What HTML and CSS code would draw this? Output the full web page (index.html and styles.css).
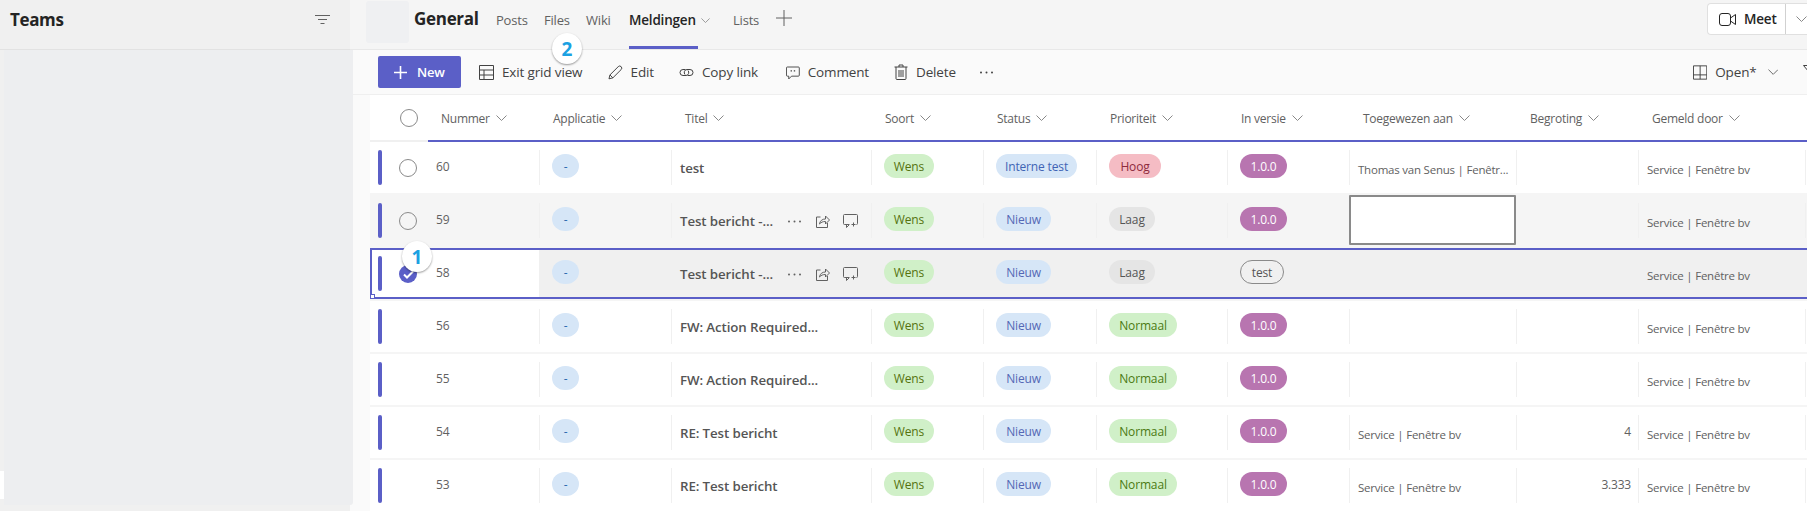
FILE: index.html
```
<!DOCTYPE html>
<html lang="en">
<head>
<meta charset="utf-8">
<title>Teams - General - Meldingen</title>
<link rel="stylesheet" href="styles.css">
</head>
<body>
<svg class="defs" width="0" height="0" aria-hidden="true">
  <symbol id="chev" viewBox="0 0 11 6"><path d="M.5.5 5.5 5.5 10.5.5" fill="none" stroke="currentColor"/></symbol>
  <symbol id="dots" viewBox="0 0 15 3"><circle cx="2" cy="1.5" r="1" fill="currentColor"/><circle cx="7.5" cy="1.5" r="1" fill="currentColor"/><circle cx="13" cy="1.5" r="1" fill="currentColor"/></symbol>
  <symbol id="share" viewBox="0 0 15 15"><path d="M5.5 3H1.5v10.500h11V9M4.500 10c.5-3.500 3-5 6-5V2l4 4-4 4V7.500c-2.500 0-4.500.7-6 2.500Z" fill="none" stroke="currentColor"/></symbol>
  <symbol id="cmtadd" viewBox="0 0 15 14"><path d="M6 10.500H1.500a1 1 0 0 1-1-1V1.500a1 1 0 0 1 1-1h12a1 1 0 0 1 1 1v8a1 1 0 0 1-1 1M3.500 10.500V13.500l3-3M10.500 8.500v4M8.500 10.500h4" fill="none" stroke="currentColor"/></symbol>
</svg>
<div class="app">
  <aside class="sidebar">
    <header class="side-head">
      <h1 class="side-title">Teams</h1>
      <svg class="side-filter" width="16" height="10" viewBox="0 0 16 10"><path d="M0 .5h15M3 4.500h9M5.500 8.500h4" stroke="#616161" fill="none"/></svg>
    </header>
    <div class="side-body">
      <div class="side-strip"><div class="side-chip"></div></div>
      <div class="side-panel"></div>
    </div>
  </aside>
  <main class="main">
    <nav class="topbar">
      <div class="channel-avatar"></div>
      <h2 class="channel-name">General</h2>
      <a class="tab tab-posts">Posts</a>
      <a class="tab tab-files">Files</a>
      <a class="tab tab-wiki">Wiki</a>
      <a class="tab tab-active">Meldingen<svg class="tab-chev" width="9" height="5"><use href="#chev"/></svg></a>
      <a class="tab tab-lists">Lists</a>
      <svg class="tab-plus" width="16" height="16" viewBox="0 0 16 16"><path d="M8 0v16M0 8h16" stroke="#616161" fill="none"/></svg>
      <div class="meet">
        <span class="meet-main">
          <svg width="17" height="13" viewBox="0 0 17 13"><rect x=".5" y=".5" width="11" height="12" rx="2.500" fill="none" stroke="#242424"/><path d="M11.500 5 16.500 1.500v10L11.500 8" fill="none" stroke="#242424"/></svg>
          Meet
        </span>
        <span class="meet-more"><svg width="11" height="6"><use href="#chev"/></svg></span>
      </div>
    </nav>
    <div class="toolbar">
      <button class="btn-new"><svg width="15" height="15" viewBox="0 0 15 15"><path d="M7.500 1v13M1 7.500h13" stroke="#fff" stroke-width="1.600" fill="none"/></svg>New</button>
      <span class="tool tool-grid"><svg width="15" height="15" viewBox="0 0 15 15"><path d="M.5.5h14v14H.5zM.5 5h14M.5 10h14M5 5v9.500" fill="none" stroke="#424242"/></svg>Exit grid view</span>
      <span class="tool tool-edit"><svg width="15" height="15" viewBox="0 0 15 15"><path d="M1 14l1-4L10.500 1.500a1.800 1.800 0 0 1 3 3L5 13ZM2 10l3 3" fill="none" stroke="#424242"/></svg>Edit</span>
      <span class="tool tool-link"><svg width="15" height="11" viewBox="0 0 15 11"><path d="M6.500 2.500h-2.500a3 3 0 0 0 0 6h3a3 3 0 0 0 2-5M8.500 8.500h2.500a3 3 0 0 0 0-6h-3a3 3 0 0 0-2 5" fill="none" stroke="#424242"/></svg>Copy link</span>
      <span class="tool tool-comment"><svg width="15" height="15" viewBox="0 0 15 15"><path d="M1.500 1.500h12a1 1 0 0 1 1 1v8a1 1 0 0 1-1 1H6l-3 3v-3H1.500a1 1 0 0 1-1-1v-8a1 1 0 0 1 1-1Z" fill="none" stroke="#424242"/><path d="M5 5h1.500v1.500H5zM8.500 5H10v1.500H8.500z" fill="#424242"/></svg>Comment</span>
      <span class="tool tool-delete"><svg width="14" height="16" viewBox="0 0 14 16"><path d="M.5 3h13M5 3V1h4v2M2 3v11.500a1 1 0 0 0 1 1h8a1 1 0 0 0 1-1V3M5 6v7M7 6v7M9 6v7" fill="none" stroke="#424242"/></svg>Delete</span>
      <svg class="tool-more" width="15" height="3"><use href="#dots"/></svg>
      <span class="tool tool-open"><svg width="15" height="15" viewBox="0 0 15 15"><path d="M.5.5h14v14H.5zM.5 10h14M7.500.5v14" fill="none" stroke="#424242"/></svg>Open*<svg class="open-chev" width="11" height="6"><use href="#chev"/></svg></span>
      <svg class="tool-filter" width="15" height="14" viewBox="0 0 15 14"><path d="M.5.5h14L9 7v6L6 11V7Z" fill="none" stroke="#424242"/></svg>
    </div>
    <section class="sheet">
      <div class="grid head">
        <div class="hcell hcell-first"><span class="radio"></span>Nummer<svg width="11" height="6"><use href="#chev"/></svg></div>
        <div class="hcell">Applicatie<svg width="11" height="6"><use href="#chev"/></svg></div>
        <div class="hcell">Titel<svg width="11" height="6"><use href="#chev"/></svg></div>
        <div class="hcell">Soort<svg width="11" height="6"><use href="#chev"/></svg></div>
        <div class="hcell">Status<svg width="11" height="6"><use href="#chev"/></svg></div>
        <div class="hcell">Prioriteit<svg width="11" height="6"><use href="#chev"/></svg></div>
        <div class="hcell">In versie<svg width="11" height="6"><use href="#chev"/></svg></div>
        <div class="hcell">Toegewezen aan<svg width="11" height="6"><use href="#chev"/></svg></div>
        <div class="hcell">Begroting<svg width="11" height="6"><use href="#chev"/></svg></div>
        <div class="hcell">Gemeld door<svg width="11" height="6"><use href="#chev"/></svg></div>
      </div>
      <div class="head-rule"><span class="rule-light"></span><span class="rule-strong"></span></div>
      <div class="rows">
        <div class="grid row">
          <div class="cell first"><span class="bar"></span><span class="radio"></span><span class="num">60</span></div>
          <div class="cell"><span class="pill p-dash">-</span></div>
          <div class="cell title">test</div>
          <div class="cell"><span class="pill p-wens">Wens</span></div>
          <div class="cell"><span class="pill p-intern">Interne test</span></div>
          <div class="cell"><span class="pill p-hoog">Hoog</span></div>
          <div class="cell"><span class="pill p-version">1.0.0</span></div>
          <div class="cell text">Thomas van Senus | Fenêtr...</div>
          <div class="cell"></div>
          <div class="cell text">Service | Fenêtre bv</div>
          <div class="cell"></div>
        </div>
        <div class="grid row row-hover">
          <div class="cell first"><span class="bar"></span><span class="radio"></span><span class="num">59</span></div>
          <div class="cell"><span class="pill p-dash">-</span></div>
          <div class="cell title"><span class="title-text">Test bericht -...</span><span class="actions"><svg width="15" height="3"><use href="#dots"/></svg><svg width="15" height="15"><use href="#share"/></svg><svg width="15" height="14"><use href="#cmtadd"/></svg></span></div>
          <div class="cell"><span class="pill p-wens">Wens</span></div>
          <div class="cell"><span class="pill p-nieuw">Nieuw</span></div>
          <div class="cell"><span class="pill p-laag">Laag</span></div>
          <div class="cell"><span class="pill p-version">1.0.0</span></div>
          <div class="edit-box"></div>
          <div class="cell cell-noline"></div>
          <div class="cell text">Service | Fenêtre bv</div>
          <div class="cell"></div>
        </div>
        <div class="grid row row-selected">
          <div class="cell first"><span class="bar"></span><span class="radio-on"><svg width="11" height="9" viewBox="0 0 11 9"><path d="M1 4.500 4 7.500 10 1.500" fill="none" stroke="#fff" stroke-width="2"/></svg></span><span class="num">58</span><span class="badge badge-one">1</span></div>
          <div class="cell"><span class="pill p-dash">-</span></div>
          <div class="cell title"><span class="title-text">Test bericht -...</span><span class="actions"><svg width="15" height="3"><use href="#dots"/></svg><svg width="15" height="15"><use href="#share"/></svg><svg width="15" height="14"><use href="#cmtadd"/></svg></span></div>
          <div class="cell"><span class="pill p-wens">Wens</span></div>
          <div class="cell"><span class="pill p-nieuw">Nieuw</span></div>
          <div class="cell"><span class="pill p-laag">Laag</span></div>
          <div class="cell"><span class="pill p-outline">test</span></div>
          <div class="cell"></div>
          <div class="cell"></div>
          <div class="cell text">Service | Fenêtre bv</div>
          <div class="cell"></div>
          <span class="fill-handle"></span>
        </div>
        <div class="grid row">
          <div class="cell first"><span class="bar"></span><span class="radio-space"></span><span class="num">56</span></div>
          <div class="cell"><span class="pill p-dash">-</span></div>
          <div class="cell title">FW: Action Required...</div>
          <div class="cell"><span class="pill p-wens">Wens</span></div>
          <div class="cell"><span class="pill p-nieuw">Nieuw</span></div>
          <div class="cell"><span class="pill p-normaal">Normaal</span></div>
          <div class="cell"><span class="pill p-version">1.0.0</span></div>
          <div class="cell"></div>
          <div class="cell"></div>
          <div class="cell text">Service | Fenêtre bv</div>
          <div class="cell"></div>
        </div>
        <div class="grid row">
          <div class="cell first"><span class="bar"></span><span class="radio-space"></span><span class="num">55</span></div>
          <div class="cell"><span class="pill p-dash">-</span></div>
          <div class="cell title">FW: Action Required...</div>
          <div class="cell"><span class="pill p-wens">Wens</span></div>
          <div class="cell"><span class="pill p-nieuw">Nieuw</span></div>
          <div class="cell"><span class="pill p-normaal">Normaal</span></div>
          <div class="cell"><span class="pill p-version">1.0.0</span></div>
          <div class="cell"></div>
          <div class="cell"></div>
          <div class="cell text">Service | Fenêtre bv</div>
          <div class="cell"></div>
        </div>
        <div class="grid row">
          <div class="cell first"><span class="bar"></span><span class="radio-space"></span><span class="num">54</span></div>
          <div class="cell"><span class="pill p-dash">-</span></div>
          <div class="cell title">RE: Test bericht</div>
          <div class="cell"><span class="pill p-wens">Wens</span></div>
          <div class="cell"><span class="pill p-nieuw">Nieuw</span></div>
          <div class="cell"><span class="pill p-normaal">Normaal</span></div>
          <div class="cell"><span class="pill p-version">1.0.0</span></div>
          <div class="cell text">Service | Fenêtre bv</div>
          <div class="cell amount">4</div>
          <div class="cell text">Service | Fenêtre bv</div>
          <div class="cell"></div>
        </div>
        <div class="grid row">
          <div class="cell first"><span class="bar"></span><span class="radio-space"></span><span class="num">53</span></div>
          <div class="cell"><span class="pill p-dash">-</span></div>
          <div class="cell title">RE: Test bericht</div>
          <div class="cell"><span class="pill p-wens">Wens</span></div>
          <div class="cell"><span class="pill p-nieuw">Nieuw</span></div>
          <div class="cell"><span class="pill p-normaal">Normaal</span></div>
          <div class="cell"><span class="pill p-version">1.0.0</span></div>
          <div class="cell text">Service | Fenêtre bv</div>
          <div class="cell amount">3.333</div>
          <div class="cell text">Service | Fenêtre bv</div>
          <div class="cell"></div>
        </div>
      </div>
    </section>
    <span class="badge badge-two">2</span>
  </main>
</div>
</body>
</html>
```
FILE: styles.css
```
* { box-sizing: border-box; }
html, body { margin: 0; height: 100%; overflow: hidden; }
body { font-family: "Open Sans", "Noto Sans", sans-serif; color: #424242; background: #fafafa; }
.defs { position: absolute; }
.app { display: flex; width: 1807px; height: 511px; }

/* sidebar */
.sidebar { width: 350px; flex: none; display: flex; flex-direction: column; background: #f0f0f0; position: relative; z-index: 1; }
.side-head { height: 50px; flex: none; display: flex; align-items: center; justify-content: space-between; padding: 0 19px 10px 10px; border-bottom: 1px solid #e2e2e2; }
.side-title { margin: 0; font-size: 17px; font-weight: 700; color: #242424; letter-spacing: -.35px; }
.side-body { flex: 1; display: flex; margin-right: -3px; }
.side-strip { width: 4px; flex: none; padding-top: 421px; background: #f0f0f0; }
.side-chip { height: 28px; background: #fff; }
.side-panel { flex: 1; height: 455px; background: #edeef0; border-radius: 0 0 3px 0; }

/* main */
.main { flex: 1; min-width: 0; display: flex; flex-direction: column; position: relative; box-shadow: -2px 0 3px rgba(0,0,0,.03); overflow: hidden; }
.topbar { height: 50px; flex: none; display: flex; align-items: flex-start; background: #f5f5f5; border-bottom: 1px solid #e8e8e8; padding-left: 16px; position: relative; }
.channel-avatar { width: 43px; height: 42px; margin-top: 1px; background: #eff0f2; border-radius: 3px; }
.channel-name { margin: 6px 0 0 5px; width: 65px; font-size: 17px; line-height: 26px; font-weight: 700; color: #242424; letter-spacing: -.3px; }
.tab { margin-top: 11px; font-size: 13px; line-height: 18px; color: #616161; letter-spacing: -.2px; }
.tab-posts { margin-left: 17px; width: 32px; }
.tab-files { margin-left: 16px; width: 27px; }
.tab-wiki { margin-left: 15px; width: 28px; }
.tab-active { margin-left: 15px; height: 38px; width: 69px; color: #242424; font-weight: 600; font-size: 13.500px; white-space: nowrap; border-bottom: 3px solid #5b5fc7; }
.tab-chev { margin-left: 5px; vertical-align: 2px; color: #888; margin-right: -20px; }
.tab-lists { margin-left: 35px; width: 28px; }
.tab-plus { margin: 10px 0 0 15px; }
.meet { margin-left: auto; margin-top: 3px; width: 100px; flex: none; height: 32px; display: flex; background: #fff; border: 1px solid #e0e0e0; border-right: 0; border-radius: 4px 0 0 4px; font-size: 13.500px; font-weight: 600; color: #242424; }
.meet-main { width: 82px; display: flex; align-items: center; gap: 8px; padding-left: 11px; border-right: 1px solid #d1d1d1; letter-spacing: -.2px; }
.meet-more { flex: 1; display: flex; align-items: center; padding-left: 10px; color: #888; }

.toolbar { height: 45px; flex: none; display: flex; align-items: center; background: #fafafa; border-bottom: 1px solid #efefef; padding-left: 28px; }
.btn-new { width: 83px; height: 32px; flex: none; display: flex; align-items: center; gap: 9px; padding: 0 0 0 15px; border: 0; border-radius: 2px; background: #5b5fc7; color: #fff; font: 600 13px "Open Sans", sans-serif; letter-spacing: -.2px; }
.tool { display: inline-flex; align-items: center; gap: 8px; font-size: 13.500px; color: #424242; white-space: nowrap; letter-spacing: -.15px; flex: none; }
.tool-grid { margin-left: 18px; width: 105px; }
.tool-edit { margin-left: 24px; width: 46px; }
.tool-link { margin-left: 25px; width: 80px; }
.tool-comment { margin-left: 27px; width: 83px; }
.tool-delete { margin-left: 25px; width: 62px; }
.tool-more { margin-left: 23px; color: #424242; flex: none; }
.tool-open { margin-left: 699px; width: 85px; }
.open-chev { margin-left: 3px; color: #666; }
.tool-filter { margin-left: 25px; flex: none; }

/* sheet */
.sheet { flex: 1; margin-left: 20px; background: #fff; min-height: 0; }
.grid { display: grid; grid-template-columns: 169px 132px 200px 112px 113px 131px 122px 167px 122px 167px 40px; width: 1475px; }
.head { height: 45px; }
.hcell { display: flex; align-items: center; gap: 6px; padding: 1px 0 0 14px; font-size: 12px; color: #616161; letter-spacing: -.25px; white-space: nowrap; }
.hcell svg { color: #888; flex: none; }
.hcell-first { padding-left: 30px; }
.hcell-first .radio { margin-right: 17px; }
.head-rule { display: flex; height: 2px; }
.rule-light { width: 58px; background: #f0f0f0; }
.rule-strong { flex: 1; background: #5b5fc7; }
.rows { display: flex; flex-direction: column; gap: 2px; background: #f5f5f5; }
.row { height: 51px; background: #fff; position: relative; }
.row-hover { background: #f5f5f5; }
.row-selected { background: linear-gradient(90deg, #fff 169px, #f0f0f0 169px); box-shadow: inset 0 0 0 2px #5b5fc7; }

.cell { height: 35px; margin-top: 8px; padding-left: 12px; border-left: 1px solid #f0f0f0; min-width: 0; position: relative; }
.first { border-left: 0; padding-left: 8px; display: flex; align-items: flex-start; }
.bar { width: 4px; height: 35px; border-radius: 2px; background: #5b5fc7; flex: none; }
.radio, .radio-space { width: 18px; height: 18px; border-radius: 50%; flex: none; }
.radio { display: inline-block; border: 1.500px solid #8a8a8a; background: transparent; }
.radio-space { border: 0; }
.first .radio, .first .radio-space, .radio-on { margin: 9px 0 0 17px; }
.radio-on { width: 18px; height: 18px; border-radius: 50%; background: #5b5fc7; display: flex; align-items: center; justify-content: center; flex: none; }
.num { margin: 7px 0 0 19px; font-size: 12px; line-height: 20px; color: #616161; letter-spacing: -.2px; }
.title { display: flex; align-items: center; padding: 1px 0 0 8px; font-size: 13.300px; font-weight: 600; color: #555; letter-spacing: -.1px; white-space: nowrap; }
.title-text { width: 107px; flex: none; }
.actions { display: inline-flex; align-items: center; gap: 13px; color: #616161; }
.text { display: flex; align-items: center; padding: 3px 0 0 8px; font-size: 11.500px; color: #616161; letter-spacing: -.22px; white-space: nowrap; }
.amount { display: flex; align-items: center; justify-content: flex-end; padding: 0 7px 2px 0; font-size: 12px; color: #616161; letter-spacing: -.2px; }
.pill { display: inline-flex; align-items: center; justify-content: center; height: 24px; margin-top: 4px; border-radius: 12px; font-size: 12px; letter-spacing: -.15px; white-space: nowrap; }
.p-dash { width: 27px; background: #d6e6f7; color: #2b6cb0; border-radius: 13px / 12px; }
.p-wens { width: 50px; background: #d0f0c8; color: #55730f; }
.p-normaal { width: 68px; background: #d0f0c8; color: #4b7a12; }
.p-nieuw { width: 55px; background: #d6e6f7; color: #5468b5; }
.p-intern { width: 81px; background: #d6e6f7; color: #3f64b5; }
.p-hoog { width: 52px; background: #f5bcc4; color: #8e2a3c; }
.p-laag { width: 46px; background: #e5e5e5; color: #555; }
.p-version { width: 47px; background: #b875b0; color: #fff; }
.p-outline { width: 44px; background: transparent; border: 1px solid #8a8a8a; color: #555; }
.edit-box { height: 50px; background: #fff; border: 2px solid #8a8a8a; border-radius: 1px; }
.cell-noline { border-left: 0; }
.fill-handle { position: absolute; left: 0; bottom: 0; width: 5px; height: 5px; background: #fff; border: 1px solid #5b5fc7; }
.badge { position: absolute; display: flex; align-items: center; justify-content: center; width: 30px; height: 31px; border-radius: 50%; background: #fff; color: #1ba1e2; font-size: 19px; font-weight: 700; box-shadow: 0 1px 2px rgba(0,0,0,.4); z-index: 3; }
.badge-one { left: 32px; top: -15px; }
.badge-two { left: 202px; top: 33px; }
```
